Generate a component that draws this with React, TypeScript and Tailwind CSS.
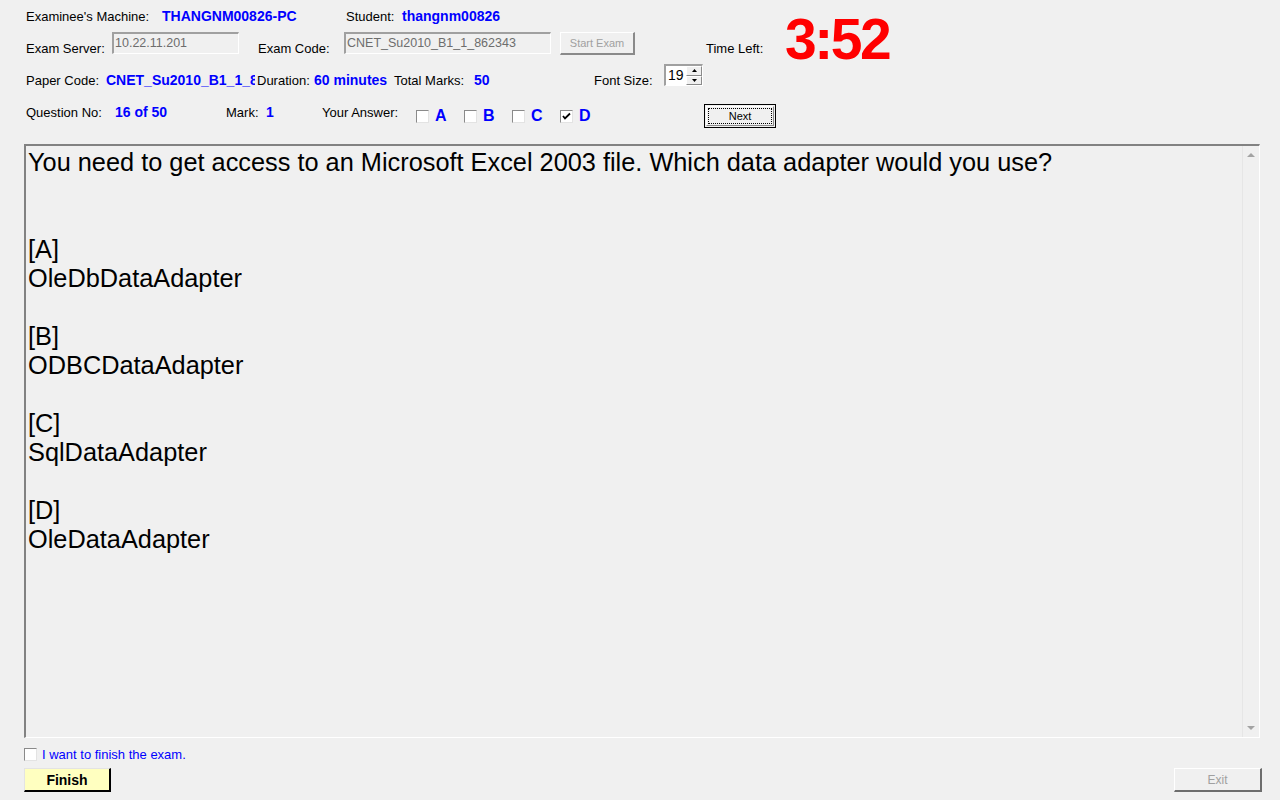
import React from "react";

const lbl = "text-[13px] leading-[15px] text-black whitespace-nowrap";
const val = "text-[14px] leading-[15px] font-bold text-[#0000ff] whitespace-nowrap";

function Box({ checked = false }: { checked?: boolean }) {
  return (
    <div className="w-[13px] h-[13px] shrink-0 border-t border-l border-[#8a8a8a] border-b border-r border-b-[#e3e3e3] border-r-[#e3e3e3] bg-white flex items-center justify-center">
      {checked && (
        <svg width="9" height="9" viewBox="0 0 9 9">
          <path d="M1 4 L3 6.5 L8 1.5" stroke="#000" strokeWidth="1.8" fill="none" />
        </svg>
      )}
    </div>
  );
}

function Choice({ letter, checked = false }: { letter: string; checked?: boolean }) {
  return (
    <div className="w-[48px] flex items-start shrink-0">
      <div className="mt-[12px]">
        <Box checked={checked} />
      </div>
      <div className="ml-[6px] mt-[9px] text-[16px] leading-[18px] font-bold text-[#0000ff]">{letter}</div>
    </div>
  );
}

function TextBox({ w, text }: { w: string; text: string }) {
  return (
    <div
      className={`${w} h-[22px] shrink-0 border-t-2 border-l-2 border-t-[#a0a0a0] border-l-[#a0a0a0] border-b border-r border-b-[#ffffff] border-r-[#ffffff] bg-[#f0f0f0] text-[12.5px] leading-[17px] text-[#6d6d6d] pl-[1px] pt-[1px] whitespace-nowrap overflow-hidden`}
    >
      {text}
    </div>
  );
}

export default function App() {
  return (
    <div className="w-[1280px] h-[800px] bg-[#f0f0f0] overflow-hidden font-['Liberation_Sans',Arial,sans-serif] flex flex-col">
      {/* top block */}
      <div className="flex pl-[26px] h-[58px] shrink-0">
        <div className="w-[680px] flex flex-col shrink-0">
          <div className="h-[32px] flex items-center">
            <div className={`${lbl} w-[136px]`}>Examinee's Machine:</div>
            <div className={`${val} w-[184px]`}>THANGNM00826-PC</div>
            <div className={`${lbl} w-[56px]`}>Student:</div>
            <div className={val}>thangnm00826</div>
          </div>
          <div className="h-[26px] flex items-start">
            <div className={`${lbl} w-[86px] mt-[9px]`}>Exam Server:</div>
            <TextBox w="w-[127px]" text="10.22.11.201" />
            <div className="w-[19px] shrink-0" />
            <div className={`${lbl} w-[86px] mt-[9px]`}>Exam Code:</div>
            <TextBox w="w-[207px]" text="CNET_Su2010_B1_1_862343" />
            <div className="w-[9px] shrink-0" />
            <div className="w-[75px] h-[23px] shrink-0 border-t border-l border-white border-b-2 border-r-2 border-b-[#8a8a8a] border-r-[#8a8a8a] bg-[#f0f0f0] text-[11px] leading-[20px] text-[#a0a0a0] text-center">
              Start Exam
            </div>
          </div>
        </div>
        <div className={`${lbl} w-[79px] mt-[41px]`}>Time Left:</div>
        <div className="mt-[11px] h-[47px] text-[57px] leading-[57px] font-bold text-[#ff0000] tracking-[-2.5px] whitespace-nowrap">
          3:52
        </div>
      </div>

      {/* row 3 */}
      <div className="flex items-start pl-[26px] h-[40px] shrink-0">
        <div className={`${lbl} w-[80px] mt-[15px]`}>Paper Code:</div>
        <div className={`${val} w-[149px] mt-[15px] overflow-hidden`}>CNET_Su2010_B1_1_862343</div>
        <div className={`${lbl} w-[57px] ml-[2px] mt-[15px]`}>Duration:</div>
        <div className={`${val} w-[80px] mt-[15px]`}>60 minutes</div>
        <div className={`${lbl} w-[80px] mt-[15px]`}>Total Marks:</div>
        <div className={`${val} w-[120px] mt-[15px]`}>50</div>
        <div className={`${lbl} w-[70px] mt-[15px]`}>Font Size:</div>
        <div className="mt-[6px] w-[39px] h-[22px] shrink-0 flex border-t-2 border-l-2 border-t-[#a0a0a0] border-l-[#a0a0a0] border-b border-r border-b-white border-r-white bg-white">
          <div className="flex-1 text-[14px] leading-[19px] pl-[2px] text-black">19</div>
          <div className="w-[16px] flex flex-col">
            <div className="flex-1 bg-[#f0f0f0] border-t border-l border-white border-b border-r border-b-[#8a8a8a] border-r-[#8a8a8a] flex items-center justify-center">
              <svg width="5" height="3" viewBox="0 0 5 3"><path d="M2.5 0 L5 3 L0 3 Z" fill="#000" /></svg>
            </div>
            <div className="flex-1 bg-[#f0f0f0] border-t border-l border-white border-b border-r border-b-[#8a8a8a] border-r-[#8a8a8a] flex items-center justify-center">
              <svg width="5" height="3" viewBox="0 0 5 3"><path d="M0 0 L5 0 L2.5 3 Z" fill="#000" /></svg>
            </div>
          </div>
        </div>
      </div>

      {/* row 4 */}
      <div className="flex items-start pl-[26px] h-[36px] shrink-0">
        <div className={`${lbl} w-[89px] mt-[7px]`}>Question No:</div>
        <div className={`${val} w-[111px] mt-[7px]`}>16 of 50</div>
        <div className={`${lbl} w-[40px] mt-[7px]`}>Mark:</div>
        <div className={`${val} w-[56px] mt-[7px]`}>1</div>
        <div className={`${lbl} w-[94px] mt-[7px]`}>Your Answer:</div>
        <Choice letter="A" />
        <Choice letter="B" />
        <Choice letter="C" />
        <Choice letter="D" checked />
        <div className="w-[96px] shrink-0" />
        <div className="mt-[6px] w-[72px] h-[24px] shrink-0 border border-black bg-[#f0f0f0] p-[1px]">
          <div className="w-full h-full border-t border-l border-white border-b border-r border-b-[#8a8a8a] border-r-[#8a8a8a] p-[1px]">
            <div className="w-full h-full border border-dotted border-black text-[11px] leading-[14px] text-black text-center">
              Next
            </div>
          </div>
        </div>
      </div>

      {/* question area */}
      <div className="mt-[10px] ml-[24px] w-[1236px] h-[594px] shrink-0 flex border-t-2 border-l-2 border-t-[#828282] border-l-[#828282] border-b border-r border-b-white border-r-white bg-[#f0f0f0]">
        <div className="flex-1 pl-[2px] pt-[2px] text-[25.33px] leading-[29px] text-black">
          <div>You need to get access to an Microsoft Excel 2003 file. Which data adapter would you use?</div>
          <div className="h-[29px]" />
          <div className="h-[29px]" />
          <div>[A]</div>
          <div>OleDbDataAdapter</div>
          <div className="h-[29px]" />
          <div>[B]</div>
          <div>ODBCDataAdapter</div>
          <div className="h-[29px]" />
          <div>[C]</div>
          <div>SqlDataAdapter</div>
          <div className="h-[29px]" />
          <div>[D]</div>
          <div>OleDataAdapter</div>
        </div>
        <div className="w-[17px] shrink-0 border-l border-[#e6e6e6] bg-[#f0f0f0] flex flex-col justify-between items-center pt-[7px] pb-[7px]">
          <svg width="8" height="4" viewBox="0 0 8 4"><path d="M4 0 L8 4 L0 4 Z" fill="#a3a3a3" /></svg>
          <svg width="8" height="4" viewBox="0 0 8 4"><path d="M0 0 L8 0 L4 4 Z" fill="#a3a3a3" /></svg>
        </div>
      </div>

      {/* finish checkbox */}
      <div className="mt-[10px] pl-[24px] flex items-center h-[13px] shrink-0">
        <Box />
        <div className="ml-[5px] text-[13px] leading-[15px] text-[#0000ff] whitespace-nowrap">I want to finish the exam.</div>
      </div>

      {/* buttons */}
      <div className="mt-[7px] pl-[24px] pr-[18px] flex justify-between shrink-0">
        <div className="w-[87px] h-[24px] border-t border-l border-[#e3e3e3] border-b-2 border-r-2 border-b-black border-r-black bg-[#ffffc0] text-[14px] leading-[22px] font-bold text-black text-center">
          Finish
        </div>
        <div className="w-[88px] h-[24px] border-t border-l border-white border-b-2 border-r-2 border-b-[#6d6d6d] border-r-[#6d6d6d] bg-[#f0f0f0] text-[12px] leading-[23px] text-[#a0a0a0] text-center">
          Exit
        </div>
      </div>
    </div>
  );
}
